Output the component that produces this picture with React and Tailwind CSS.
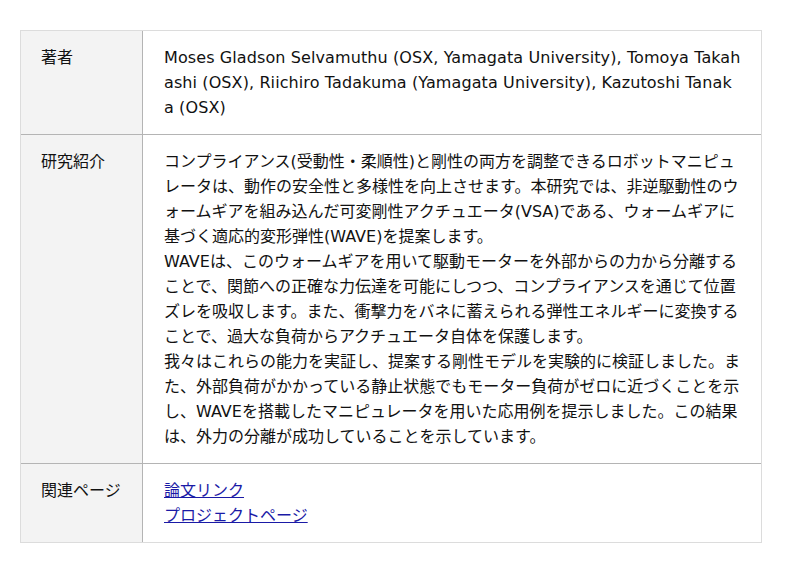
import React from 'react';

const FONT = "font-['DejaVu_Sans','Noto_Sans_CJK_JP',sans-serif]";

const ROWS = [
  {
    label: '著者',
    body: (
      <p className="tracking-[0.1px]">
        Moses Gladson Selvamuthu (OSX, Yamagata University), Tomoya Takahashi (OSX), Riichiro Tadakuma (Yamagata University), Kazutoshi Tanaka (OSX)
      </p>
    ),
  },
  {
    label: '研究紹介',
    body: (
      <>
        <p>
          コンプライアンス(受動性・柔順性)と剛性の両方を調整できるロボットマニピュレータは、動作の安全性と多様性を向上させます。本研究では、非逆駆動性のウォームギアを組み込んだ可変剛性アクチュエータ(VSA)である、ウォームギアに基づく適応的変形弾性(WAVE)を提案します。
        </p>
        <p>
          WAVEは、このウォームギアを用いて駆動モーターを外部からの力から分離することで、関節への正確な力伝達を可能にしつつ、コンプライアンスを通じて位置ズレを吸収します。また、衝撃力をバネに蓄えられる弾性エネルギーに変換することで、過大な負荷からアクチュエータ自体を保護します。
        </p>
        <p>
          我々はこれらの能力を実証し、提案する剛性モデルを実験的に検証しました。また、外部負荷がかかっている静止状態でもモーター負荷がゼロに近づくことを示し、WAVEを搭載したマニピュレータを用いた応用例を提示しました。この結果は、外力の分離が成功していることを示しています。
        </p>
      </>
    ),
  },
  {
    label: '関連ページ',
    body: (
      <div className="flex flex-col">
        <a href="#" className="text-[#1a1aa6] underline">論文リンク</a>
        <a href="#" className="text-[#1a1aa6] underline">プロジェクトページ</a>
      </div>
    ),
  },
];

export default function App() {
  return (
    <div className={`min-h-screen bg-white pt-[30px] pl-[20px] ${FONT} text-[16px] leading-[25px] text-[#111]`}>
      <div className="w-[742px] border border-[#dcdcdc]">
        {ROWS.map((row, i) => (
          <div
            key={row.label}
            className={`grid grid-cols-[122px_1fr] ${i < ROWS.length - 1 ? 'border-b border-[#b4b4b4]' : ''}`}
          >
            <div className="bg-[#f3f3f3] border-r border-[#b4b4b4] px-5 py-[14px]">
              {row.label}
            </div>
            <div className="pl-[21px] pr-5 py-[14px] break-all">
              {row.body}
            </div>
          </div>
        ))}
      </div>
    </div>
  );
}
